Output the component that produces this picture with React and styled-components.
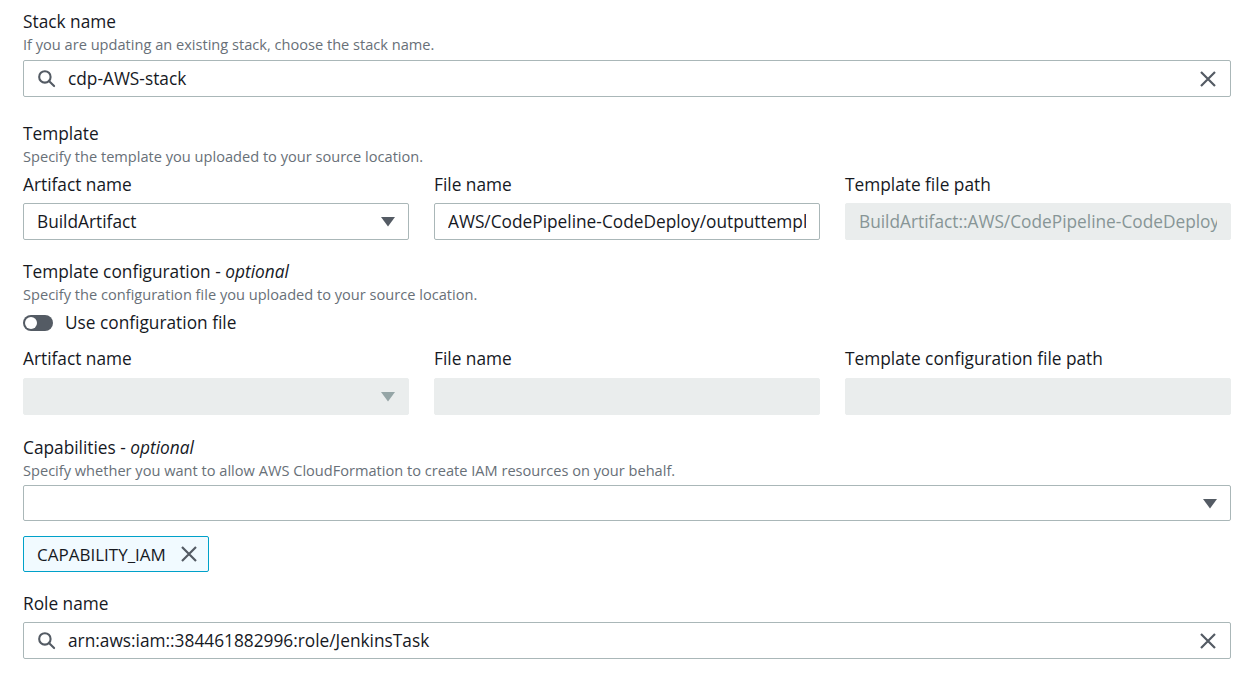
import React from 'react';
import styled, { createGlobalStyle } from 'styled-components';

const GlobalStyle = createGlobalStyle`
  body {
    margin: 0;
    background: #ffffff;
    font-family: 'Open Sans', 'Noto Sans', sans-serif;
    color: #16191f;
  }
`;

const Page = styled.div`
  width: 1208px;
  padding: 11px 0 0 23px;
`;

const Section = styled.section`
  margin-top: ${p => p.gap || 0}px;
`;

const Label = styled.div`
  font-size: 17.3px;
  line-height: 22px;
  color: #16191f;

  em {
    font-style: italic;
  }
`;

const Description = styled.div`
  font-size: 14.6px;
  line-height: 18px;
  margin-top: 2px;
  color: #687078;
`;

const Box = styled.div`
  display: flex;
  align-items: center;
  box-sizing: border-box;
  height: ${p => p.h || 37}px;
  margin-top: ${p => p.top || 0}px;
  padding: 0 13px;
  gap: 12px;
  border: 1px solid ${p => (p.disabled ? '#eaeded' : '#aab7b8')};
  border-radius: 2px;
  background: ${p => (p.disabled ? '#eaeded' : '#ffffff')};
  color: ${p => (p.disabled ? '#879596' : '#16191f')};
  font-size: 17.3px;
  overflow: hidden;
`;

const Value = styled.span`
  flex: 1;
  white-space: nowrap;
  overflow: hidden;
`;

const Columns = styled.div`
  display: grid;
  grid-template-columns: repeat(3, 386px);
  column-gap: 25px;
  margin-top: ${p => p.top || 0}px;
`;

const Column = styled.div`
  display: flex;
  flex-direction: column;
`;

const ToggleRow = styled.div`
  display: flex;
  align-items: center;
  gap: 12px;
  margin-top: 9px;
  font-size: 17.3px;
  line-height: 22px;
`;

const Track = styled.span`
  position: relative;
  width: 30px;
  height: 16px;
  border-radius: 8px;
  background: #545b64;
`;

const Knob = styled.span`
  position: absolute;
  left: 2px;
  top: 2px;
  width: 12px;
  height: 12px;
  border-radius: 50%;
  background: #ffffff;
`;

const Token = styled.div`
  display: flex;
  width: fit-content;
  align-items: center;
  gap: 14px;
  box-sizing: border-box;
  height: 36px;
  margin-top: 15px;
  padding: 0 10px 0 13px;
  border: 1px solid #00a1c9;
  border-radius: 2px;
  background: #f1faff;
  font-size: 17px;
`;

const Icon = styled.svg`
  flex: none;
  display: block;
`;

const SearchIcon = () => (
  <Icon width="19" height="19" viewBox="0 0 20 20" fill="none" stroke="#545b64" strokeWidth="2.2">
    <circle cx="8.3" cy="8.3" r="6" />
    <path d="M12.6 12.6 L18 18" strokeLinecap="round" />
  </Icon>
);

const ClearIcon = () => (
  <Icon width="18" height="18" viewBox="0 0 18 18" fill="none" stroke="#545b64" strokeWidth="2.2">
    <path d="M2 2 L16 16 M16 2 L2 16" />
  </Icon>
);

const Caret = ({ muted }) => (
  <Icon width="14" height="11" viewBox="0 0 14 11">
    <path d="M0 1 H14 L7 10.5 Z" fill={muted ? '#95a5a6' : '#545b64'} />
  </Icon>
);

const Search = ({ value, top }) => (
  <Box top={top}>
    <SearchIcon />
    <Value>{value}</Value>
    <ClearIcon />
  </Box>
);

const Select = ({ value, disabled, top, h }) => (
  <Box disabled={disabled} top={top} h={h}>
    <Value>{value}</Value>
    <Caret muted={disabled} />
  </Box>
);

const Field = ({ label, children }) => (
  <Column>
    <Label>{label}</Label>
    {children}
  </Column>
);

export default function App() {
  return (
    <Page>
      <GlobalStyle />

      <Section>
        <Label>Stack name</Label>
        <Description>If you are updating an existing stack, choose the stack name.</Description>
        <Search value="cdp-AWS-stack" top={7} />
      </Section>

      <Section gap={26}>
        <Label>Template</Label>
        <Description>Specify the template you uploaded to your source location.</Description>
        <Columns top={9}>
          <Field label="Artifact name">
            <Select value="BuildArtifact" top={7} />
          </Field>
          <Field label="File name">
            <Box top={7}>
              <Value>AWS/CodePipeline-CodeDeploy/outputtempl</Value>
            </Box>
          </Field>
          <Field label="Template file path">
            <Box top={7} disabled>
              <Value>BuildArtifact::AWS/CodePipeline-CodeDeploy</Value>
            </Box>
          </Field>
        </Columns>
      </Section>

      <Section gap={21}>
        <Label>Template configuration - <em>optional</em></Label>
        <Description>Specify the configuration file you uploaded to your source location.</Description>
        <ToggleRow>
          <Track><Knob /></Track>
          Use configuration file
        </ToggleRow>
        <Columns top={14}>
          <Field label="Artifact name">
            <Select disabled top={8} />
          </Field>
          <Field label="File name">
            <Box top={8} disabled />
          </Field>
          <Field label="Template configuration file path">
            <Box top={8} disabled />
          </Field>
        </Columns>
      </Section>

      <Section gap={22}>
        <Label>Capabilities - <em>optional</em></Label>
        <Description>Specify whether you want to allow AWS CloudFormation to create IAM resources on your behalf.</Description>
        <Select top={6} h={36} />
        <Token>
          CAPABILITY_IAM
          <ClearIcon />
        </Token>
      </Section>

      <Section gap={21}>
        <Label>Role name</Label>
        <Search value="arn:aws:iam::384461882996:role/JenkinsTask" top={7} />
      </Section>
    </Page>
  );
}
